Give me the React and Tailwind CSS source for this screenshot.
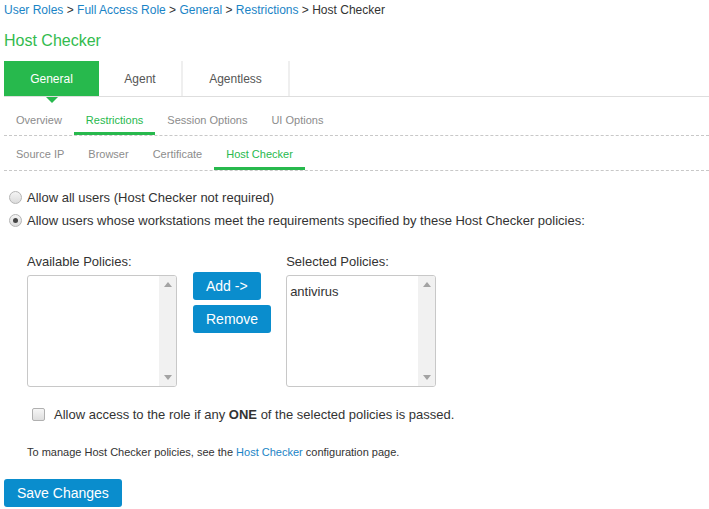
import React from "react";

const Link = ({ children }) => <span className="text-[#1a84c6]">{children}</span>;

function ListBox({ children }) {
  return (
    <div className="flex h-[112px] w-[150px] overflow-hidden rounded-[3px] border border-[#c8c8c8] bg-white">
      <div className="flex-1 pl-[3px] pt-[8px] text-[13px] leading-[15px] text-[#333]">{children}</div>
      <div className="flex w-[17px] flex-col items-center justify-between bg-[#f1f1f1] py-[6px]">
        <svg width="8" height="5" viewBox="0 0 8 5"><path d="M4 0 L8 5 L0 5 Z" fill="#a3a3a3" /></svg>
        <svg width="8" height="5" viewBox="0 0 8 5"><path d="M0 0 L8 0 L4 5 Z" fill="#a3a3a3" /></svg>
      </div>
    </div>
  );
}

function Radio({ checked }) {
  return (
    <span className="relative inline-flex h-[13px] w-[13px] items-center justify-center rounded-full border border-[#b5b5b5] bg-gradient-to-b from-[#f4f4f4] to-[#dcdcdc]">
      {checked && <span className="h-[5px] w-[5px] rounded-full bg-[#444]" />}
    </span>
  );
}

export default function App() {
  const sub1 = ["Overview", "Restrictions", "Session Options", "UI Options"];
  const sub2 = ["Source IP", "Browser", "Certificate", "Host Checker"];
  return (
    <div className="h-[509px] w-[709px] bg-white font-['Liberation_Sans',Arial,sans-serif] text-[#333]">
      <div className="pl-[4px] pt-[3px] text-[12px] leading-[14px]">
        <Link>User Roles</Link> &gt; <Link>Full Access Role</Link> &gt; <Link>General</Link> &gt;{" "}
        <Link>Restrictions</Link> &gt; <span>Host Checker</span>
      </div>
      <div className="pl-[4px] pt-[15px] text-[16px] leading-[18px] text-[#33bb4e]">Host Checker</div>

      <div className="ml-[4px] mt-[11px] flex h-[36px] border-b border-[#dedede]">
        <div className="relative flex w-[95px] items-center justify-center bg-[#27b94d] text-[12px] text-white">
          General
          <span className="absolute left-1/2 top-full -ml-[6px] mt-[1px] h-0 w-0 border-x-[6px] border-t-[6px] border-x-transparent border-t-[#27b94d]" />
        </div>
        <div className="flex w-[84px] items-center justify-center border-r-2 border-[#efefef] text-[12px] text-[#555]">Agent</div>
        <div className="flex w-[107px] items-center justify-center border-r-2 border-[#efefef] text-[12px] text-[#555]">Agentless</div>
      </div>

      <div className="ml-[4px] flex border-b border-dashed border-[#c8c8c8]">
        {sub1.map((t) => (
          <div
            key={t}
            className={`border-b-[3px] px-[12px] pb-[5px] pt-[17px] text-[11px] leading-[13px] ${
              t === "Restrictions" ? "border-[#27b94d] text-[#27b94d]" : "border-transparent text-[#8c8c8c]"
            }`}
          >
            {t}
          </div>
        ))}
      </div>
      <div className="ml-[4px] flex border-b border-dashed border-[#c8c8c8]">
        {sub2.map((t) => (
          <div
            key={t}
            className={`border-b-[3px] px-[12px] pb-[6px] pt-[12px] text-[11px] leading-[13px] ${
              t === "Host Checker" ? "border-[#27b94d] text-[#27b94d]" : "border-transparent text-[#8c8c8c]"
            }`}
          >
            {t}
          </div>
        ))}
      </div>

      <div className="mt-[19px] flex items-center pl-[9px] text-[13px] leading-[15px]">
        <Radio />
        <span className="ml-[5px]">Allow all users (Host Checker not required)</span>
      </div>
      <div className="mt-[8px] flex items-center pl-[9px] text-[13px] leading-[15px]">
        <Radio checked />
        <span className="ml-[5px]">Allow users whose workstations meet the requirements specified by these Host Checker policies:</span>
      </div>

      <div className="mt-[26px] flex pl-[27px]">
        <div>
          <div className="mb-[6px] text-[13px] leading-[15px]">Available Policies:</div>
          <ListBox />
        </div>
        <div className="ml-[16px] flex flex-col items-start pt-[18px]">
          <button className="h-[28px] rounded-[3px] bg-[#0a8dcd] px-[13px] text-[14px] text-white">Add -&gt;</button>
          <button className="mt-[5px] h-[28px] rounded-[3px] bg-[#0a8dcd] px-[13px] text-[14px] text-white">Remove</button>
        </div>
        <div className="ml-[15px]">
          <div className="mb-[6px] text-[13px] leading-[15px]">Selected Policies:</div>
          <ListBox>antivirus</ListBox>
        </div>
      </div>

      <div className="mt-[20px] flex items-center pl-[32px] text-[13px] leading-[15px]">
        <span className="h-[13px] w-[13px] rounded-[2px] border border-[#b0b0b0] bg-gradient-to-b from-[#f6f6f6] to-[#dedede]" />
        <span className="ml-[9px]">
          Allow access to the role if any <b>ONE</b> of the selected policies is passed.
        </span>
      </div>

      <div className="mt-[24px] pl-[27px] text-[11px] leading-[13px]">
        To manage Host Checker policies, see the <Link>Host Checker</Link> configuration page.
      </div>

      <div className="mt-[20px] pl-[4px]">
        <button className="h-[28px] rounded-[3px] bg-[#0a8dcd] px-[13px] text-[14px] text-white">Save Changes</button>
      </div>
    </div>
  );
}
